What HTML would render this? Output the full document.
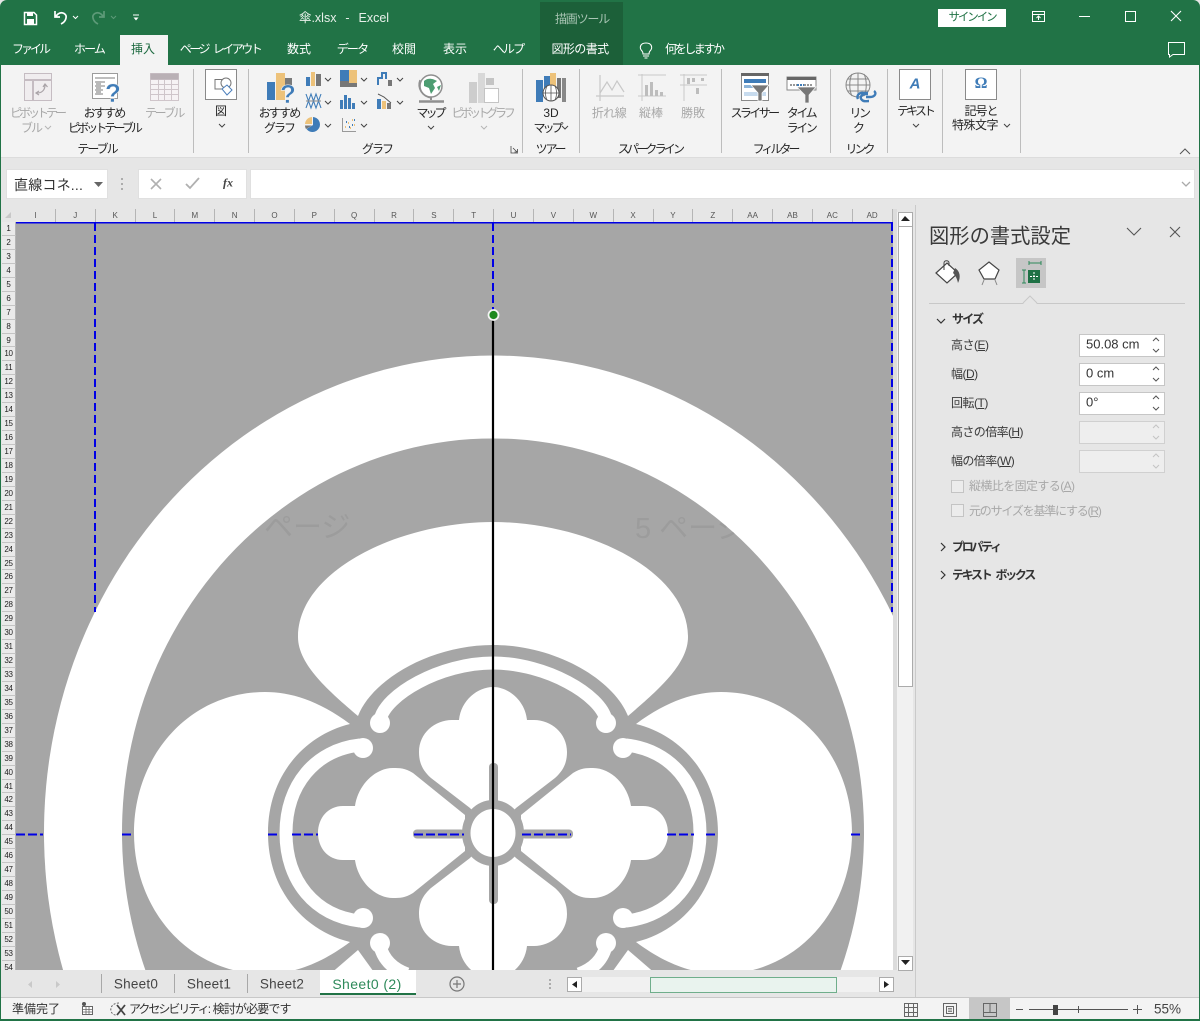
<!DOCTYPE html>
<html lang="ja"><head><meta charset="utf-8"><title>傘.xlsx - Excel</title>
<style>
html,body{margin:0;padding:0;background:#fff;width:1200px;height:1021px;overflow:hidden}
#w{position:relative;width:1200px;height:1021px;overflow:hidden;background:#e6e6e6;font-family:"Liberation Sans","Noto Sans CJK JP",sans-serif;font-size:12px;color:#262626}
.a{position:absolute}
.c,.l{position:absolute;white-space:nowrap;line-height:1}
.c{transform:translate(-50%,-50%)}
.l{transform:translateY(-50%)}
.k{letter-spacing:-2.4px}
.m{letter-spacing:-1.2px}
.d{color:#a8a8a8}
.g{color:#fff}
.lb{color:#3a3a3a;font-size:12px}
#ch{position:absolute;left:16px;top:209px;width:877px;height:13px;display:flex;background:#e6e6e6}
#ch span{flex:0 0 39.85px;box-sizing:border-box;border-right:1px solid #b5b5b5;text-align:center;font-size:8px;line-height:13px;color:#555}
#rh{position:absolute;left:2px;top:222px;width:14px;height:748px;overflow:hidden;background:#eaeaea}
#rh span{display:block;height:13.95px;box-sizing:border-box;border-bottom:1px solid #c4c4c4;border-right:1px solid #b5b5b5;text-align:center;font-size:8px;line-height:14px;color:#222;letter-spacing:-.3px}
.box{position:absolute;background:#fff;border:1px solid #c6c6c6;box-sizing:border-box}
.dis{background:#eeeeee;border-color:#d0d0d0}
.u{text-decoration:underline}
</style></head><body><div id="w">

<!-- title & tabs -->
<div class="a" style="left:0;top:0;width:1200px;height:65px;background:#217346;border-radius:7px 7px 0 0"></div>
<div class="a" style="left:540px;top:2px;width:83px;height:63px;background:#1c6039"></div>
<div class="a" style="left:120px;top:35px;width:48px;height:30px;background:#f3f3f3"></div>
<div class="c" style="left:344px;top:18px;color:#e8f0ea;font-size:12.5px;word-spacing:1px">傘.xlsx&nbsp;&nbsp;-&nbsp;&nbsp;Excel</div>
<div class="c m" style="left:582px;top:19px;color:#a9c5b4">描画ツール</div>
<div class="c k g" style="left:30px;top:49px;letter-spacing:-3px">ファイル</div>
<div class="c k g" style="left:89px;top:49px;letter-spacing:-1.8px">ホーム</div>
<div class="c" style="left:143px;top:49px;color:#1e6b41">挿入</div>
<div class="c k g" style="left:220px;top:49px;letter-spacing:-2.5px;word-spacing:4px">ページ レイアウト</div>
<div class="c g" style="left:299px;top:49px">数式</div>
<div class="c k g" style="left:352px;top:49px;letter-spacing:-1.8px">データ</div>
<div class="c g" style="left:404px;top:49px">校閲</div>
<div class="c g" style="left:455px;top:49px">表示</div>
<div class="c k g" style="left:508px;top:49px;letter-spacing:-1.8px">ヘルプ</div>
<div class="c g" style="left:580px;top:49px;letter-spacing:-.6px">図形の書式</div>
<div class="l g" style="left:665px;top:49px;letter-spacing:-2.4px">何をしますか</div>
<div class="a" style="left:938px;top:9px;width:68px;height:18px;background:#fff"></div>
<div class="c k" style="left:972px;top:18px;color:#217346;font-size:11.5px;letter-spacing:-2.1px">サインイン</div>

<!-- ribbon -->
<div class="a" style="left:1px;top:65px;width:1198px;height:92px;background:#f3f3f3"></div>
<div class="a" style="left:1px;top:157px;width:1198px;height:1px;background:#dcdcdc"></div>

<div class="c k d" style="left:37px;top:113px;letter-spacing:-3px">ピボットテー</div>
<div class="c k d" style="left:31px;top:128px;letter-spacing:-2px">ブル</div>
<div class="c m" style="left:104px;top:113px;letter-spacing:-1.8px">おすすめ</div>
<div class="c k" style="left:104px;top:128px;letter-spacing:-2.9px">ピボットテーブル</div>
<div class="c k d" style="left:164px;top:113px;letter-spacing:-2.3px">テーブル</div>
<div class="c k" style="left:97px;top:149px;letter-spacing:-2px">テーブル</div>
<div class="c" style="left:221px;top:111px">図</div>
<div class="c m" style="left:279px;top:113px;letter-spacing:-1.8px">おすすめ</div>
<div class="c k" style="left:279px;top:128px;letter-spacing:-1.9px">グラフ</div>
<div class="c k" style="left:430px;top:113px;letter-spacing:-3px">マップ</div>
<div class="c k d" style="left:482px;top:113px;letter-spacing:-3.3px">ピボットグラフ</div>
<div class="c k" style="left:377px;top:149px;letter-spacing:-1.9px">グラフ</div>
<div class="c" style="left:551px;top:113px">3D</div>
<div class="c k" style="left:547px;top:128px;letter-spacing:-3px">マップ</div>
<div class="c k" style="left:550px;top:149px;letter-spacing:-2.2px">ツアー</div>
<div class="c d" style="left:609px;top:113px;letter-spacing:-.6px">折れ線</div>
<div class="c d" style="left:651px;top:113px">縦棒</div>
<div class="c d" style="left:693px;top:113px">勝敗</div>
<div class="c k" style="left:650px;top:149px;letter-spacing:-2.8px">スパークライン</div>
<div class="c k" style="left:754px;top:113px;letter-spacing:-2.6px">スライサー</div>
<div class="c k" style="left:801px;top:113px;letter-spacing:-2.4px">タイム</div>
<div class="c k" style="left:801px;top:128px;letter-spacing:-2.4px">ライン</div>
<div class="c k" style="left:775px;top:149px;letter-spacing:-3px">フィルター</div>
<div class="c k" style="left:859px;top:113px;letter-spacing:-2.5px">リン</div>
<div class="c" style="left:859px;top:128px">ク</div>
<div class="c k" style="left:859px;top:149px;letter-spacing:-3px">リンク</div>
<div class="c k" style="left:915px;top:111px;letter-spacing:-3px">テキスト</div>
<div class="c" style="left:981px;top:111px;letter-spacing:-1px">記号と</div>
<div class="c" style="left:975px;top:125px;letter-spacing:-.5px">特殊文字</div>

<div class="box" style="left:205px;top:69px;width:32px;height:31px;border-color:#8a8a8a"></div>
<div class="box" style="left:899px;top:69px;width:32px;height:31px;border-color:#8a8a8a"></div>
<div class="box" style="left:965px;top:69px;width:32px;height:31px;border-color:#8a8a8a"></div>
<div class="c" style="left:915px;top:84px;color:#3f7cb8;font:italic bold 15px 'Liberation Sans',sans-serif">A</div>
<div class="c" style="left:981px;top:84px;color:#3f7cb8;font:bold 16px 'Liberation Serif',serif">Ω</div>

<!-- formula bar -->
<div class="box" style="left:6px;top:169px;width:102px;height:30px;border-color:#e0e0e0"></div>
<div class="l" style="left:14px;top:185px;font-size:14px;color:#333;letter-spacing:.2px">直線コネ...</div>
<div class="box" style="left:138px;top:169px;width:109px;height:30px;border-color:#e0e0e0"></div>
<div class="box" style="left:250px;top:169px;width:945px;height:30px;border-color:#e0e0e0"></div>
<div class="c" style="left:228px;top:183px;font:italic bold 12px 'Liberation Serif',serif;color:#444">fx</div>

<!-- grid headers -->
<div id="ch"><span>I</span><span>J</span><span>K</span><span>L</span><span>M</span><span>N</span><span>O</span><span>P</span><span>Q</span><span>R</span><span>S</span><span>T</span><span>U</span><span>V</span><span>W</span><span>X</span><span>Y</span><span>Z</span><span>AA</span><span>AB</span><span>AC</span><span>AD</span></div>
<div id="rh"><span>1</span><span>2</span><span>3</span><span>4</span><span>5</span><span>6</span><span>7</span><span>8</span><span>9</span><span>10</span><span>11</span><span>12</span><span>13</span><span>14</span><span>15</span><span>16</span><span>17</span><span>18</span><span>19</span><span>20</span><span>21</span><span>22</span><span>23</span><span>24</span><span>25</span><span>26</span><span>27</span><span>28</span><span>29</span><span>30</span><span>31</span><span>32</span><span>33</span><span>34</span><span>35</span><span>36</span><span>37</span><span>38</span><span>39</span><span>40</span><span>41</span><span>42</span><span>43</span><span>44</span><span>45</span><span>46</span><span>47</span><span>48</span><span>49</span><span>50</span><span>51</span><span>52</span><span>53</span><span>54</span></div>

<!-- sheet drawing -->
<svg class="a" style="left:0;top:0" width="1200" height="1021" viewBox="0 0 1200 1021">
<defs>
<clipPath id="sc"><rect x="16" y="222" width="877" height="748"/></clipPath>
<clipPath id="ir"><path d="M149 980A371 394 0 1 1 837 980Z"/></clipPath>
<g id="ql">
 <path d="M350 724C318 700 290 692 265 692C190 692 134 755 134 833C134 911 190 974 265 974C290 974 318 966 350 942C305 931 268 891 268 833C268 775 305 735 350 724Z" fill="#fff"/>
 <path d="M360 745C315 750 286 785 286 833C286 881 315 916 360 921" fill="none" stroke="#fff" stroke-width="13"/>
 <circle cx="363" cy="748" r="10" fill="#fff"/><circle cx="363" cy="918" r="10" fill="#fff"/>
 <path d="M465 815L413 773C405 768 400 768 393 768C375 768 358 785 355 806L343 806C328 806 318 818 318 833C318 848 328 860 343 860L355 860C358 881 375 898 393 898C400 898 405 898 413 893L465 851Z" fill="#fff"/>
 <path d="M358 950L329 975H376Z" fill="#fff"/>
 <path d="M380 946Q385 966 407 974" fill="none" stroke="#fff" stroke-width="13"/>
 <circle cx="380" cy="943" r="10" fill="#fff"/>
</g>
</defs>
<rect x="16" y="222" width="877" height="748" fill="#a6a6a6"/>
<g clip-path="url(#sc)">
 <path d="M66 980A449 477 0 1 1 920 980Z" fill="#fff"/>
 <path d="M149 980A371 394 0 1 1 837 980Z" fill="#a6a6a6"/>
 <g clip-path="url(#ir)">
 <text x="264" y="537" font-size="29" fill="#9c9c9c" font-family="Liberation Sans,Noto Sans CJK JP,sans-serif">ページ</text>
 <text x="635" y="538" font-size="29" fill="#9c9c9c" font-family="Liberation Sans,Noto Sans CJK JP,sans-serif">5 ページ</text>
 </g>
 <use href="#ql"/>
 <use href="#ql" transform="translate(986 0) scale(-1 1)"/>
 <path d="M358 716C330 692 298 665 298 637C298 570 400 522 493 522C586 522 688 570 688 637C688 665 656 692 628 716C614 680 556 645 493 645C430 645 372 680 358 716Z" fill="#fff"/>
 <path d="M380 720C385 695 440 663 493 663C546 663 601 695 606 720" fill="none" stroke="#fff" stroke-width="13"/>
 <circle cx="380" cy="723" r="10" fill="#fff"/><circle cx="606" cy="723" r="10" fill="#fff"/>
 <path d="M470 808L431 778C422 770 419 762 419 752C419 733 435 720 452 720L459 720C461 700 478 687 493 687C508 687 525 700 527 720L534 720C551 720 567 733 567 752C567 762 564 770 555 778L516 808L493 833Z" fill="#fff"/>
 <path d="M470 858L431 888C422 896 419 904 419 914C419 933 435 946 452 946L459 946C461 966 478 979 493 979C508 979 525 966 527 946L534 946C551 946 567 933 567 914C567 904 564 896 555 888L516 858L493 833Z" fill="#fff"/>
 <ellipse cx="493" cy="833" rx="31" ry="33" fill="#a6a6a6"/>
 <ellipse cx="493" cy="833" rx="22.5" ry="24" fill="#fff"/>
 <rect x="489" y="763" width="9" height="44" rx="4" fill="#a6a6a6"/>
 <rect x="489" y="860" width="9" height="44" rx="4" fill="#a6a6a6"/>
 <rect x="413" y="829.500" width="52" height="9" rx="4" fill="#a6a6a6"/>
 <rect x="521" y="829.500" width="52" height="9" rx="4" fill="#a6a6a6"/>
 <g stroke="#0000e6" fill="none">
  <path d="M16 222.500H893" stroke-width="2"/>
  <path d="M95 223V612M493 223V315M892 223V612" stroke-width="2" stroke-dasharray="8 4"/>
  <path d="M16 834.500H43M122 834.500H134M268 834.500H279M292 834.500H318M414 834.500H464M522 834.500H571M667 834.500H694M706 834.500H717M851 834.500H863" stroke-width="2" stroke-dasharray="9 3"/>
 </g>
 <path d="M493 315V970" stroke="#000" stroke-width="2.200"/>
</g>
<circle cx="493.500" cy="315" r="5" fill="#1f8a1f" stroke="#f4f4f4" stroke-width="1.800"/>

<!-- separators ribbon -->
<path d="M193.500 69V153M248.500 69V153M522.500 69V153M579.500 69V153M721.500 69V153M830.500 69V153M887.500 69V153M942.500 69V153M1020.500 69V153" stroke="#bdbdbd"/>

<!-- QAT -->
<g fill="none" stroke="#fff">
 <path d="M24.500 12.500H34L36.500 15V24.500H24.500Z" stroke-width="1.500"/><rect x="27" y="12" width="6" height="4" fill="#fff" stroke="none"/><rect x="27" y="19" width="7" height="5.500" fill="#fff" stroke="none"/>
 <path d="M55 11V17H60M55 17L58 14C62 11 67 14 66 18C65.500 21 63 23 61 24" stroke-width="1.700"/>
 <path d="M73 16L75.500 18.500L78 16" stroke-width="1"/>
 <g stroke="#5d9a78"><path d="M104 11V17H99M104 17L101 14C97 11 92 14 93 18C93.500 21 96 23 98 24" stroke-width="1.700"/><path d="M111 16L113.500 18.500L116 16" stroke-width="1"/></g>
 <path d="M133 15H139" stroke-width="1"/><path d="M133.500 17.500H138.500L136 20.500Z" fill="#fff" stroke="none"/>
 <!-- window controls -->
 <rect x="1032.500" y="11.500" width="12" height="10" stroke-width="1"/><path d="M1032.500 14.500H1044.500M1038.500 20V16M1036.500 18L1038.500 16L1040.500 18"/>
 <path d="M1079 16.500H1090"/>
 <rect x="1125.500" y="11.500" width="10" height="10"/>
 <path d="M1171 11L1181 21M1181 11L1171 21" stroke-width="1.100"/>
 <!-- bulb -->
 <path d="M642 51C639 48 640 43 646 43C652 43 653 48 650 51C649 52 649 53 649 54H643C643 53 643 52 642 51ZM643 56H649M644.500 58H647.500" stroke-width="1.100"/>
 <!-- comment -->
 <path d="M1168.500 42.500H1184.500V54.500H1173L1169.500 57V54.500H1168.500Z" stroke-width="1"/>
</g>

<!-- ribbon icons -->
<!-- pivot disabled -->
<g fill="none" stroke="#c5bcc2"><rect x="24.500" y="73.500" width="27" height="27" fill="#f0edef"/><path d="M25 80H51M33 80V100" stroke-width="2"/><path d="M37 93C42 93 45 90 45 85M43 87L45 84L47.500 87M39 91L36 93L39 95" stroke="#a9a3a7" stroke-width="1.200"/></g>
<!-- rec pivot -->
<g><rect x="92.500" y="73.500" width="25" height="25" fill="#fff" stroke="#9b9b9b"/><path d="M95 78H115M95 82H105M95 86H105M95 90H103M95 94H103" stroke="#a9a9a9" stroke-width="1.500"/><rect x="96" y="81" width="5" height="14" fill="#b9b9b9"/>
<text x="113" y="102" font-size="26" font-weight="bold" fill="#3f7cb8" text-anchor="middle" font-family="Liberation Sans,sans-serif" stroke="#f3f3f3" stroke-width=".5">?</text></g>
<!-- table -->
<g fill="#f6f2f4" stroke="#cfc5ca"><rect x="150.500" y="73.500" width="28" height="27"/><path d="M150 79.500H179M150 84.500H179M150 89.500H179M150 94.500H179M158.500 73V101M164.500 73V101M171.500 73V101" fill="none"/><rect x="150.500" y="73.500" width="28" height="6" fill="#b9b0b5" stroke="none"/></g>
<!-- shapes -->
<g fill="none" stroke="#4a7ebb" stroke-width="1"><path d="M215 79.500H224V89H215Z" stroke="#777"/><circle cx="226" cy="83" r="5" stroke="#777" fill="#fff"/><path d="M222 89L227 85L232 90L227 95Z" fill="#fff"/></g>
<!-- rec chart -->
<rect x="267" y="82" width="8" height="18" fill="#3f7cb8"/><rect x="276" y="73" width="9" height="27" fill="#edc27a"/><rect x="285" y="78" width="7" height="7" fill="#7a7a7a"/>
<text x="288" y="103" font-size="26" font-weight="bold" fill="#3f7cb8" text-anchor="middle" font-family="Liberation Sans,sans-serif" stroke="#f3f3f3" stroke-width=".6">?</text>
<!-- mini charts -->
<rect x="306" y="77" width="4" height="9" fill="#3f7cb8"/><rect x="311" y="72" width="4" height="14" fill="#edc27a"/><rect x="316" y="74" width="5" height="12" fill="#777"/>
<rect x="340" y="70" width="9" height="11" fill="#3f7cb8"/><rect x="340" y="81" width="17" height="6" fill="#777"/><rect x="349" y="70" width="8" height="13" fill="#edc27a"/>
<path d="M378 85V78H382V73H386V79" fill="none" stroke="#3f7cb8" stroke-width="2"/><rect x="388" y="80" width="4" height="6" fill="#777"/>
<path d="M306 108L311 94L316 108L321 94M306 94L311 108L316 94L321 108" fill="none" stroke="#3f7cb8" stroke-width="1.100"/><path d="M306 101H321" stroke="#888"/>
<rect x="340" y="100" width="3" height="9" fill="#3f7cb8"/><rect x="344" y="95" width="3" height="14" fill="#3f7cb8"/><rect x="348" y="98" width="3" height="11" fill="#3f7cb8"/><rect x="352" y="103" width="3" height="6" fill="#3f7cb8"/>
<rect x="377" y="99" width="4" height="10" fill="#3f7cb8"/><rect x="382" y="101" width="4" height="8" fill="#edc27a"/><rect x="387" y="103" width="4" height="6" fill="#777"/><path d="M378 94L384 97L391 103" stroke="#555" fill="none"/>
<path d="M313 125V117A7.500 7.500 0 1 1 306.500 129Z" fill="#3f7cb8"/><path d="M312 124H305A7.500 7.500 0 0 1 312 117Z" fill="#edc27a"/><path d="M312 125.500H305A7.500 7.500 0 0 0 306 129Z" fill="#777"/>
<path d="M342.500 118V131.500H356" fill="none" stroke="#999"/><path d="M345 127h1M348 123h1M350 128h1M352 120h1M354 125h1" stroke="#edc27a" stroke-width="2"/><path d="M346 122h1M349 127h1M352 125h1M354 120h1" stroke="#3f7cb8" stroke-width="2"/>
<!-- chevrons -->
<g fill="none" stroke="#444" stroke-width="1">
<path d="M325 78L328 81L331 78M361 78L364 81L367 78M397 78L400 81L403 78M325 101L328 104L331 101M361 101L364 104L367 101M397 101L400 104L403 101M325 124L328 127L331 124M361 124L364 127L367 124M219 124L222 127L225 124M428 126L431 129L434 126M562 126L565 129L568 126M913 124L916 127L919 124M1004 124L1007 127L1010 124"/>
<path d="M1180 154L1185 149L1190 154" stroke="#555"/>
<path d="M511 146V153H518M513 148L517 152M514.500 152H517.500V149" stroke-width=".8"/>
<g stroke="#b5b5b5"><path d="M45 126L48 129L51 126M481 126L484 129L487 126"/></g>
</g>
<!-- globe -->
<circle cx="431" cy="86" r="11" fill="#fff" stroke="#8f8f8f" stroke-width="1.500"/><path d="M424 81C428 77 434 79 437 81L433 84L435 88L431 94L429 88L424 86ZM437 87L441 85L439 91Z" fill="#4d9d72"/><path d="M420 80C417 88 422 97 432 98" fill="none" stroke="#8f8f8f" stroke-width="1.500"/><path d="M431 98V100" stroke="#8f8f8f" stroke-width="2"/><path d="M419 101.500H444" stroke="#8f8f8f" stroke-width="2.500"/>
<!-- pivot chart -->
<g fill="#cdcdcd"><rect x="469" y="82" width="8" height="21"/><rect x="478" y="73" width="7" height="30" fill="#d8d8d8"/><rect x="486" y="78" width="8" height="7" fill="#c4c4c4"/><rect x="484.500" y="88.500" width="14" height="14" fill="#fff" stroke="#c4c4c4"/></g>
<!-- 3d map -->
<rect x="536" y="80" width="7" height="22" fill="#3f7cb8"/><rect x="544" y="76" width="6" height="20" fill="#3f7cb8"/><rect x="550" y="73" width="6" height="14" fill="#edc27a"/><rect x="557" y="78" width="4" height="20" fill="#777"/><rect x="562" y="78" width="4" height="24" fill="#888"/>
<circle cx="551" cy="93" r="8" fill="#fff" stroke="#555"/><path d="M543 93H559M551 85V101M547 86C545 90 545 96 547 100M555 86C557 90 557 96 555 100" fill="none" stroke="#555" stroke-width=".8"/>
<!-- sparklines -->
<g fill="none" stroke="#c8c8c8"><path d="M596 96H624M600 75V101M600 93L607 82L612 90L617 81L624 92" stroke-width="1.200"/><path d="M638 96H666M642 74V101M638 75H666" /><path d="M680 85H707M684 74V101M680 75H707"/></g>
<g fill="#bdbdbd"><rect x="645" y="85" width="3" height="11"/><rect x="650" y="82" width="3" height="14"/><rect x="655" y="90" width="3" height="6"/><rect x="660" y="92" width="3" height="4"/><rect x="687" y="78" width="3" height="6"/><rect x="692" y="78" width="3" height="4"/><rect x="696" y="88" width="3" height="6"/><rect x="701" y="78" width="3" height="3"/></g>
<!-- slicer -->
<rect x="741.500" y="73.500" width="27" height="27" fill="#fff" stroke="#8a8a8a"/><rect x="741" y="73" width="28" height="3" fill="#666"/><rect x="744" y="79" width="22" height="4" fill="#3f7cb8"/><rect x="744" y="85" width="12" height="3" fill="#8db4d8"/><rect x="744" y="92" width="22" height="4" fill="#c7dbee"/><path d="M751 85H769L762 93V101H758V93Z" fill="#777" stroke="#fff" stroke-width=".7"/>
<!-- timeline -->
<rect x="787" y="77" width="29" height="13" fill="#fff" stroke="#8a8a8a"/><rect x="787" y="77" width="29" height="3" fill="#666"/><path d="M790 85H797" stroke="#999" stroke-width="2" stroke-dasharray="2 1"/><path d="M797 85H804" stroke="#3f7cb8" stroke-width="2" stroke-dasharray="2 1"/><path d="M804 85H813" stroke="#999" stroke-width="2" stroke-dasharray="2 1"/><path d="M797 87H816L809 95V103H805V95Z" fill="#777" stroke="#f3f3f3" stroke-width=".7"/>
<!-- link -->
<g fill="none" stroke="#888"><circle cx="858" cy="85" r="12"/><path d="M846 85H870M858 73V97M852 74C849 80 849 90 852 96M864 74C867 80 867 90 864 96M848 79H868M848 91H868"/></g>
<path d="M858 99C856 95 860 92 864 93H868M866 97H870C875 97 877 93 874 91M868 94H866C862 94 859 97 862 100C864 102 866 101 869 101" fill="none" stroke="#3f7cb8" stroke-width="2.400"/>
<!-- formula bar marks -->
<path d="M151 179L161 189M161 179L151 189" stroke="#b0b0b0" stroke-width="1.600"/>
<path d="M186 184L190 188L199 178" fill="none" stroke="#b0b0b0" stroke-width="1.800"/>
<path d="M94 182H103L98.500 187Z" fill="#666"/>
<path d="M122 178v2M122 183v2M122 188v2" stroke="#999" stroke-width="1.500"/>
<path d="M1182 182L1186 186L1190 182" fill="none" stroke="#aaa" stroke-width="1.300"/>
<path d="M5 218L11 212V218Z" fill="#c8c8c8"/>
</svg>

<!-- scrollbars -->
<div class="a" style="left:897px;top:212px;width:16px;height:758px;background:#f1f1f1"></div>
<div class="a" style="left:893px;top:209px;width:4px;height:761px;background:#dcdcdc"></div>
<div class="box" style="left:898px;top:226px;width:15px;height:461px;border-color:#ababab"></div>
<div class="box" style="left:898px;top:212px;width:15px;height:15px;border-color:#ababab"></div>
<div class="box" style="left:898px;top:956px;width:15px;height:15px;border-color:#ababab"></div>
<div class="a" style="left:915px;top:205px;width:1px;height:792px;background:#cacaca"></div>

<!-- panel -->
<div class="l" style="left:929px;top:237px;font-size:20.300px;color:#3a3a3a">図形の書式設定</div>
<div class="a" style="left:1016px;top:258px;width:30px;height:30px;background:#c6c6c6"></div>
<div class="a" style="left:929px;top:303px;width:256px;height:1px;background:#c8c8c8"></div>

<div class="l" style="left:952px;top:319px;font-weight:bold;letter-spacing:-1.800px;color:#333">サイズ</div>
<div class="l lb" style="left:951px;top:345px;letter-spacing:-.5px">高さ(<span class="u">E</span>)</div>
<div class="l lb" style="left:951px;top:374px;letter-spacing:-.5px">幅(<span class="u">D</span>)</div>
<div class="l lb" style="left:951px;top:403px;letter-spacing:-.5px">回転(<span class="u">T</span>)</div>
<div class="l lb" style="left:951px;top:432px;letter-spacing:-.6px">高さの倍率(<span class="u">H</span>)</div>
<div class="l lb" style="left:951px;top:461px;letter-spacing:-.6px">幅の倍率(<span class="u">W</span>)</div>
<div class="box" style="left:1079px;top:334px;width:86px;height:23px"></div>
<div class="box" style="left:1079px;top:363px;width:86px;height:23px"></div>
<div class="box" style="left:1079px;top:392px;width:86px;height:23px"></div>
<div class="box dis" style="left:1079px;top:421px;width:86px;height:23px"></div>
<div class="box dis" style="left:1079px;top:450px;width:86px;height:23px"></div>
<div class="l" style="left:1086px;top:344px;font-size:13px;color:#333">50.08 cm</div>
<div class="l" style="left:1086px;top:373px;font-size:13px;color:#333">0 cm</div>
<div class="l" style="left:1086px;top:402px;font-size:13px;color:#333">0°</div>
<div class="a" style="left:951px;top:480px;width:11px;height:11px;border:1px solid #c4c4c4;background:#ececec"></div>
<div class="a" style="left:951px;top:504px;width:11px;height:11px;border:1px solid #c4c4c4;background:#ececec"></div>
<div class="l d" style="left:969px;top:486px;letter-spacing:-.6px">縦横比を固定する(<span class="u">A</span>)</div>
<div class="l d" style="left:969px;top:511px;letter-spacing:-1.200px">元のサイズを基準にする(<span class="u">R</span>)</div>
<div class="l" style="left:952px;top:547px;font-weight:bold;letter-spacing:-2.300px;color:#333">プロパティ</div>
<div class="l" style="left:952px;top:575px;font-weight:bold;letter-spacing:-2.300px;word-spacing:4px;color:#333">テキスト ボックス</div>

<svg class="a" style="left:0;top:0" width="1200" height="1021" viewBox="0 0 1200 1021">
<path d="M905 216L901 221H910Z" fill="#222"/><path d="M901 960H910L905.500 965Z" fill="#222"/>
<g fill="none" stroke="#555">
 <path d="M1127 228L1134 235L1141 228M1170 227L1180 237M1180 227L1170 237" stroke-width="1.100"/>
 <path d="M937 319L941 323L945 319M941 543L945 547L941 551M941 571L945 575L941 579" stroke="#333" stroke-width="1.200"/>
 <path d="M1153 341L1156 338L1159 341M1153 349L1156 352L1159 349M1153 370L1156 367L1159 370M1153 378L1156 381L1159 378M1153 399L1156 396L1159 399M1153 407L1156 410L1159 407"/>
 <path d="M1153 428L1156 425L1159 428M1153 436L1156 439L1159 436M1153 457L1156 454L1159 457M1153 465L1156 468L1159 465" stroke="#c4c4c4"/>
 <path d="M1023 303L1030 296L1037 303" stroke="#c8c8c8"/>
</g>
<path d="M1023.500 304H1036.500" stroke="#e6e6e6" stroke-width="2"/>
<!-- paint -->
<path d="M936 273L947 263L958 273L947 283Z" fill="#fff" stroke="#444" stroke-width="1.200"/><path d="M944 270V263C944 260 949 260 949 263V266" fill="none" stroke="#444"/><path d="M955 268C960 271 961 277 958 283C957 278 955 275 953 273Z" fill="#555"/>
<!-- pentagon -->
<path d="M989 262L999 270L995 279H984L979 270Z" fill="#fff" stroke="#444" stroke-width="1.200"/><path d="M984 280L982 285M995 280L997 285" stroke="#888"/>
<!-- size icon -->
<rect x="1028" y="270" width="12" height="13" fill="#1e7145"/><path d="M1029 263H1041M1029 261V265M1041 261V265M1024 270V283M1022 270H1026M1022 283H1026" stroke="#2e8a5a" fill="none"/><path d="M1030 276.500H1038M1034 272V281" stroke="#fff" stroke-dasharray="2 1"/>
<!-- sheet tab bits -->
<path d="M101.500 974V993M174.500 974V993M247.500 974V993" stroke="#a8a8a8"/>
<path d="M32 981L28 984.500L32 988M56 981L60 984.500L56 988" fill="#c9c9c9" stroke="none"/>
<circle cx="457" cy="984" r="7" fill="none" stroke="#777" stroke-width="1.200"/><path d="M453 984H461M457 980V988" stroke="#777" stroke-width="1.200"/>
<path d="M550 979v2M550 983v2M550 987v2" stroke="#999" stroke-width="1.500"/>
</svg>

<!-- sheet tabs -->
<div class="a" style="left:320px;top:970px;width:96px;height:25px;background:#fff"></div>
<div class="a" style="left:320px;top:993px;width:96px;height:2px;background:#217346"></div>
<div class="c" style="left:136px;top:984px;font-size:13.5px;letter-spacing:.25px;color:#444">Sheet0</div>
<div class="c" style="left:209px;top:984px;font-size:13.5px;letter-spacing:.25px;color:#444">Sheet1</div>
<div class="c" style="left:282px;top:984px;font-size:13.5px;letter-spacing:.25px;color:#444">Sheet2</div>
<div class="c" style="left:367px;top:984px;font-size:14px;letter-spacing:.4px;color:#2e8a5a">Sheet0 (2)</div>
<div class="a" style="left:581px;top:977px;width:298px;height:15px;background:#f1f1f1"></div>
<div class="a" style="left:650px;top:977px;width:187px;height:16px;box-sizing:border-box;background:#e9f3ee;border:1px solid #6fae8b"></div>
<div class="box" style="left:567px;top:977px;width:15px;height:15px;border-color:#ababab"></div>
<div class="box" style="left:879px;top:977px;width:15px;height:15px;border-color:#ababab"></div>

<!-- status bar -->
<div class="a" style="left:0;top:997px;width:1200px;height:1px;background:#c8c8c8"></div>
<div class="a" style="left:1px;top:998px;width:1198px;height:21px;background:#f3f3f3"></div>
<div class="a" style="left:969px;top:998px;width:41px;height:21px;background:#c6c6c6"></div>
<div class="a" style="left:0;top:1019px;width:1200px;height:2px;background:#217346"></div>
<div class="a" style="left:0;top:65px;width:1px;height:956px;background:#217346"></div>
<div class="a" style="left:1199px;top:65px;width:1px;height:956px;background:#217346"></div>
<div class="l" style="left:12px;top:1009px;color:#333">準備完了</div>
<div class="l" style="left:129px;top:1009px;color:#333;letter-spacing:-.85px"><span style="letter-spacing:-2px">アクセシビリティ</span>: 検討が必要です</div>
<div class="l" style="left:1154px;top:1009px;font-size:13.5px;color:#444">55%</div>

<svg class="a" style="left:0;top:0" width="1200" height="1021" viewBox="0 0 1200 1021">
<path d="M577 981L572 984.500L577 988Z" fill="#222"/><path d="M884 981L889 984.500L884 988Z" fill="#222"/>
<g fill="none" stroke="#666">
 <rect x="82.500" y="1006.500" width="10" height="8" fill="#fff"/><path d="M83 1009.500H92M83 1012H92M86 1007V1014M89 1007V1014" stroke-width=".8"/><circle cx="84" cy="1004" r="2" fill="#555" stroke="none"/>
 <path d="M119 1003C113 1003 110 1007 111 1011C112 1014 114 1015 116 1015" stroke-dasharray="2 1.500"/>
 <path d="M117 1005L125 1015M125 1005L117 1015" stroke="#444" stroke-width="1.800"/>
 <path d="M904.500 1003.500H917.500V1016.500H904.500ZM904.500 1007.500H917.500M904.500 1012.500H917.500M908.500 1003.500V1016.500M913.500 1003.500V1016.500"/>
 <rect x="943.500" y="1003.500" width="13" height="13"/><rect x="946.500" y="1006.500" width="7" height="7"/><path d="M948 1008.500H952M948 1010H952M948 1011.500H952" stroke-width=".8"/>
 <path d="M983.500 1003.500H996.500V1016.500H983.500ZM983.500 1012.500H996.500M990 1003.500V1012.500"/>
</g>
<path d="M1016 1009.500H1023M1029 1009.500H1128M1133 1009.500H1142M1137.500 1005V1014M1078.500 1006V1013" stroke="#555"/>
<rect x="1053" y="1005" width="5" height="10" fill="#444"/>
</svg>
</div></body></html>
